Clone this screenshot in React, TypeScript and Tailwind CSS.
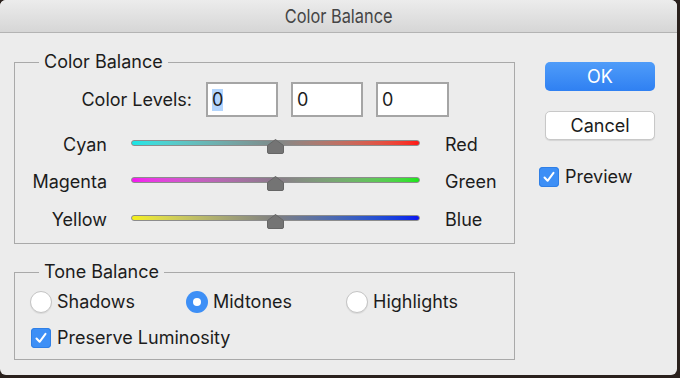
import { useState } from "react";

type SliderRow = {
  left: string;
  right: string;
  track: string;
};

const sliderRows: SliderRow[] = [
  {
    left: "Cyan",
    right: "Red",
    track: "bg-linear-to-r from-[#12e6e6] via-[#7d8a8a] to-[#ff1414]",
  },
  {
    left: "Magenta",
    right: "Green",
    track: "bg-linear-to-r from-[#f514f0] via-[#8a7a8a] to-[#16e616]",
  },
  {
    left: "Yellow",
    right: "Blue",
    track: "bg-linear-to-r from-[#f5f010] via-[#7f7f80] to-[#1010f0]",
  },
];

const CheckBox = ({ checked }: { checked: boolean }) => (
  <span
    className={
      checked
        ? "flex items-center justify-center w-[20px] h-[20px] rounded-[4px] bg-[#3d8ff6] shadow-[inset_0_0_0_1px_#2f7fe6]"
        : "flex w-[20px] h-[20px] rounded-[4px] bg-white border border-[#b8b8b8]"
    }
  >
    {checked && (
      <svg width="14" height="14" viewBox="0 0 14 14">
        <path
          d="M2.5 7.5 L5.6 10.8 L11.5 2.8"
          fill="none"
          stroke="white"
          strokeWidth="2"
          strokeLinecap="round"
          strokeLinejoin="round"
        />
      </svg>
    )}
  </span>
);

const Radio = ({ selected }: { selected: boolean }) =>
  selected ? (
    <span className="flex items-center justify-center w-[22px] h-[22px] rounded-full bg-[#3d8ff6]">
      <span className="w-[8px] h-[8px] rounded-full bg-white" />
    </span>
  ) : (
    <span className="w-[22px] h-[22px] rounded-full bg-white border border-[#c4c4c4] shadow-[0_1px_1px_rgba(0,0,0,0.08)]" />
  );

const Thumb = () => (
  <svg
    width="17"
    height="15"
    viewBox="0 0 17 15"
    className="absolute left-[136px] top-[2px]"
  >
    <path
      d="M8.5 0.5 L16.5 6.5 L16.5 13 Q16.5 14.5 15 14.5 L2 14.5 Q0.5 14.5 0.5 13 L0.5 6.5 Z"
      fill="#747474"
      stroke="#666"
      strokeWidth="1"
    />
  </svg>
);

const App = () => {
  const [tone, setTone] = useState("midtones");
  const [preview, setPreview] = useState(true);
  const [luminosity, setLuminosity] = useState(true);

  return (
    <div className="w-[680px] h-[378px] bg-[#2a211d] overflow-hidden font-['Inter','Liberation_Sans',sans-serif] text-[18px] leading-[22px] text-[#1c1c1c]">
      <div className="w-[677px] h-[375px] rounded-[6px] bg-[#ececec] overflow-hidden flex flex-col">
        {/* title bar */}
        <div className="h-[33px] shrink-0 flex items-center justify-center bg-linear-to-b from-[#ececec] to-[#d6d6d6] border-b border-[#b3b3b3]">
          <span className="text-[19px] text-[#454545] scale-x-[0.86] mt-[2px]">
            Color Balance
          </span>
        </div>

        <div className="flex pl-[14px]">
          <div className="flex flex-col">
            {/* color balance group */}
            <fieldset className="mt-[18px] w-[501px] h-[193px] border border-[#a9a9a9]">
              <legend className="ml-[24px] px-[5px] leading-[22px]">
                Color Balance
              </legend>
              <div className="flex items-center mt-[9px]">
                <span className="w-[177px] text-right">Color Levels:</span>
                <div className="ml-[14px] w-[72px] h-[35px] bg-white border-2 border-[#a5a5a5] flex items-center pl-[4px]">
                  <span className="bg-[#b3d5fd]">0</span>
                </div>
                <div className="ml-[13px] w-[72px] h-[35px] bg-white border-2 border-[#a5a5a5] flex items-center pl-[4px]">
                  0
                </div>
                <div className="ml-[13px] w-[73px] h-[35px] bg-white border-2 border-[#a5a5a5] flex items-center pl-[4px]">
                  0
                </div>
              </div>
              <div className="mt-[9px] flex flex-col">
                {sliderRows.map((row) => (
                  <div key={row.left} className="flex items-center h-[37.5px]">
                    <span className="w-[92px] text-right">{row.left}</span>
                    <div className="relative ml-[24px] w-[289px] h-[16px]">
                      <div
                        className={`absolute left-0 right-0 top-[3px] h-[6px] rounded-full border border-[#8c8c8c] ${row.track}`}
                      />
                      <Thumb />
                    </div>
                    <span className="ml-[25px]">{row.right}</span>
                  </div>
                ))}
              </div>
            </fieldset>

            {/* tone balance group */}
            <fieldset className="mt-[17px] w-[501px] h-[99px] border border-[#a9a9a9]">
              <legend className="ml-[24px] px-[5px] leading-[22px]">
                Tone Balance
              </legend>
              <div className="flex items-center mt-[8px] pl-[15px]">
                {[
                  { id: "shadows", label: "Shadows", w: "w-[156px]" },
                  { id: "midtones", label: "Midtones", w: "w-[160px]" },
                  { id: "highlights", label: "Highlights", w: "w-[140px]" },
                ].map((opt) => (
                  <label
                    key={opt.id}
                    className={`flex items-center ${opt.w}`}
                    onClick={() => setTone(opt.id)}
                  >
                    <Radio selected={tone === opt.id} />
                    <span className="ml-[5px]">{opt.label}</span>
                  </label>
                ))}
              </div>
              <label
                className="flex items-center mt-[14px] pl-[16px]"
                onClick={() => setLuminosity(!luminosity)}
              >
                <CheckBox checked={luminosity} />
                <span className="ml-[6px]">Preserve Luminosity</span>
              </label>
            </fieldset>
          </div>

          {/* right column */}
          <div className="flex flex-col ml-[24px] mt-[29px]">
            <button className="ml-[6px] w-[110px] h-[29px] rounded-[5px] bg-linear-to-b from-[#4f9cf9] to-[#2f80f2] text-white leading-none">
              OK
            </button>
            <button className="ml-[6px] mt-[20px] w-[110px] h-[29px] rounded-[5px] bg-white border border-[#c8c8c8] shadow-[0_1px_1px_rgba(0,0,0,0.1)] leading-none">
              Cancel
            </button>
            <label
              className="flex items-center mt-[26px]"
              onClick={() => setPreview(!preview)}
            >
              <CheckBox checked={preview} />
              <span className="ml-[6px]">Preview</span>
            </label>
          </div>
        </div>
      </div>
    </div>
  );
};

export default App;
